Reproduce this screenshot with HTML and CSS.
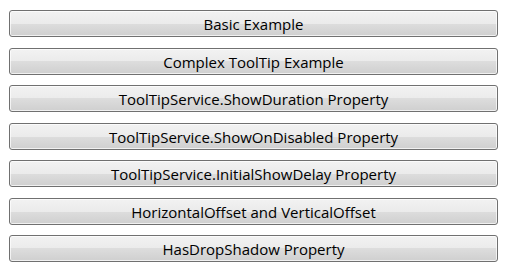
FILE: index.html
```html
<!DOCTYPE html>
<html>
<head>
<meta charset="utf-8">
<link rel="stylesheet" href="styles.css">
</head>
<body>
<div class="list">
  <button class="btn">Basic Example</button>
  <button class="btn">Complex ToolTip Example</button>
  <button class="btn">ToolTipService.ShowDuration Property</button>
  <button class="btn">ToolTipService.ShowOnDisabled Property</button>
  <button class="btn">ToolTipService.InitialShowDelay Property</button>
  <button class="btn">HorizontalOffset and VerticalOffset</button>
  <button class="btn">HasDropShadow Property</button>
</div>
</body>
</html>
```
FILE: styles.css
```css
html, body {
  margin: 0;
  padding: 0;
  background: #ffffff;
}
.list {
  display: flex;
  flex-direction: column;
  gap: 10.5px;
  padding: 10px 10px 0 9px;
}
.btn {
  height: 27px;
  width: 100%;
  box-sizing: border-box;
  margin: 0;
  padding: 1px 0 0 0;
  border: 1px solid #707070;
  border-radius: 3px;
  background: linear-gradient(to bottom, #f2f2f2 0%, #ebebeb 50%, #dddddd 50%, #cfcfcf 100%);
  box-shadow: inset 0 0 0 1px rgba(255,255,255,0.7);
  font-family: "Open Sans", "Noto Sans", sans-serif;
  font-size: 15px;
  color: #000;
  line-height: 24px;
  text-align: center;
}
```
